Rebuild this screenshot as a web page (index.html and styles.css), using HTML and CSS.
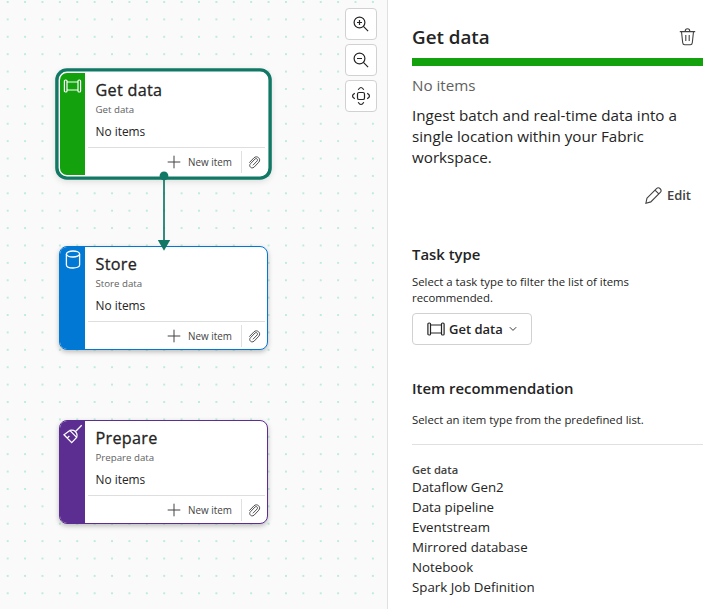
FILE: index.html
```html
<!DOCTYPE html>
<html lang="en">
<head>
<meta charset="utf-8">
<title>Task flow</title>
<link rel="stylesheet" href="styles.css">
</head>
<body>
<svg class="symbols" aria-hidden="true">
  <symbol id="pipe" viewBox="0 0 18 14"><path d="M3.5 3h11M3.5 11h11"/><rect x=".9" y="1" width="2.6" height="12" rx="1.1"/><rect x="14.5" y="1" width="2.6" height="12" rx="1.1"/></symbol>
  <symbol id="plus" viewBox="0 0 14 14"><path d="M7 .7v12.6M.7 7h12.6"/></symbol>
  <symbol id="clip" viewBox="0 0 14 14"><path d="M1.4 7.2 6.4 2C9.6-1.2 14.7 3.2 11.6 6.7L6.7 11.9C4 14.5.2 11 2.6 8.4L7.5 3.3C9.1 1.8 11.2 3.8 9.8 5.4L5.3 10"/></symbol>
</svg>
<div class="app">
  <main class="canvas">
    <section class="node get selected">
      <div class="stripe"><svg class="pipe-icon"><use href="#pipe"/></svg></div>
      <div class="content">
        <div class="info"><h3>Get data</h3><p class="kind">Get data</p><p class="count">No items</p></div>
        <div class="actions"><div class="new"><svg class="plus"><use href="#plus"/></svg><span>New item</span></div><div class="attach"><svg><use href="#clip"/></svg></div></div>
      </div>
    </section>
    <section class="node store">
      <div class="stripe"><svg class="store-icon" viewBox="0 0 16 19"><ellipse cx="8" cy="4" rx="6.6" ry="3"/><path d="M1.4 4v11c0 4 13.2 4 13.2 0V4"/></svg></div>
      <div class="content">
        <div class="info"><h3>Store</h3><p class="kind">Store data</p><p class="count">No items</p></div>
        <div class="actions"><div class="new"><svg class="plus"><use href="#plus"/></svg><span>New item</span></div><div class="attach"><svg><use href="#clip"/></svg></div></div>
      </div>
    </section>
    <section class="node prepare">
      <div class="stripe"><svg class="broom-icon" viewBox="0 0 20 20"><path d="M18.7 1.3 12.3 7.7M6.8 6.4l6.9 7M6.8 6.4 1 10.8 8.7 18.6l5-5.2C15 11 13.2 7.4 10.6 6.4c-1.3-.4-2.7-.4-3.8 0M4.2 14l2.2-2"/></svg></div>
      <div class="content">
        <div class="info"><h3>Prepare</h3><p class="kind">Prepare data</p><p class="count">No items</p></div>
        <div class="actions"><div class="new"><svg class="plus"><use href="#plus"/></svg><span>New item</span></div><div class="attach"><svg><use href="#clip"/></svg></div></div>
      </div>
    </section>
    <svg class="edge" viewBox="0 0 14 80"><path d="M7 4v67" stroke="#117865" stroke-width="1.7"/><circle cx="7" cy="4.9" r="4.4" fill="#117865"/><path d="M.8 69h12.4L7 79.7z" fill="#117865"/></svg>
    <div class="zoom">
      <button aria-label="Zoom in"><svg viewBox="0 0 16 16"><circle cx="6.5" cy="6.5" r="5.4"/><path d="m10.4 10.4 4.7 4.7M6.5 4v5M4 6.5h5"/></svg></button>
      <button aria-label="Zoom out"><svg viewBox="0 0 16 16"><circle cx="6.5" cy="6.5" r="5.4"/><path d="m10.4 10.4 4.7 4.7M4 6.5h5"/></svg></button>
      <button aria-label="Fit"><svg class="fit" viewBox="0 0 20 20"><rect x="6.5" y="6.5" width="7" height="7" rx="1.6"/><path d="M7.2 3.8Q10-.8 12.8 3.8M7.2 16.2q2.8 4.6 5.6 0M3.8 7.2Q-.8 10 3.8 12.8M16.2 7.2q4.6 2.8 0 5.6"/></svg></button>
    </div>
  </main>
  <aside class="panel">
    <header><h1>Get data</h1><svg class="trash" viewBox="0 0 17 18"><path d="M.8 3.6h15.4M6.2 3.4C6.2-.1 10.8-.1 10.8 3.4M2.5 3.8l1.2 11c.1 1.2.9 2 2 2h5.6c1.1 0 1.9-.8 2-2l1.2-11M6.8 7v6M10.2 7v6"/></svg></header>
    <div class="bar"></div>
    <p class="status">No items</p>
    <p class="description">Ingest batch and real-time data into a<br>single location within your Fabric<br>workspace.</p>
    <div class="edit"><svg viewBox="0 0 17 17"><path d="M2 11.1 11.5 1.6C13.9-.7 17.6 3 15.3 5.4L5.8 14.9.9 16.2zM10 3.1l3.8 3.8"/></svg><span>Edit</span></div>
    <h2>Task type</h2>
    <p class="hint">Select a task type to filter the list of items<br>recommended.</p>
    <button class="picker"><svg class="pipe-icon"><use href="#pipe"/></svg><span>Get data</span><svg class="chevron" viewBox="0 0 8 6"><path d="m.8 1.2 3.2 3.2 3.2-3.2"/></svg></button>
    <h2 class="recommend">Item recommendation</h2>
    <p class="hint second">Select an item type from the predefined list.</p>
    <hr>
    <h4>Get data</h4>
    <ul><li>Dataflow Gen2</li><li>Data pipeline</li><li>Eventstream</li><li>Mirrored database</li><li>Notebook</li><li>Spark Job Definition</li></ul>
  </aside>
</div>
</body>
</html>
```
FILE: styles.css
```css
* { box-sizing: border-box; }
body { margin: 0; font-family: "Open Sans", "Noto Sans", sans-serif; color: #242424; overflow: hidden; }
h1, h2, h3, h4, p, ul { margin: 0; padding: 0; font-weight: 400; }
h1, h2, h4 { font-weight: 600; }
button { font: inherit; color: inherit; background: #fff; border: 1px solid #d1d1d1; border-radius: 4px; padding: 0; display: flex; align-items: center; }
svg { fill: none; stroke: currentColor; stroke-width: 1.1; flex: none; display: block; }
.symbols { position: absolute; width: 0; height: 0; }
.app { display: flex; width: 711px; height: 609px; }

.canvas {
  position: relative; width: 387px; height: 609px; background-color: #fafafa;
  background-image: radial-gradient(circle at center, #9fe6d0 0.5px, transparent 1.1px);
  background-size: 17.4px 17.4px; background-position: -1px -6.7px;
}
.node {
  position: absolute; left: 59px; width: 209px; height: 104px; display: flex; overflow: hidden;
  background: #fff; border: 1px solid var(--tone); border-radius: 8px; box-shadow: 0 2px 5px rgba(0, 0, 0, .25);
}
.get { --tone: #13a10e; top: 72px; }
.store { --tone: #0078d4; top: 246px; }
.prepare { --tone: #5c2e91; top: 420px; }
.selected { border-color: #fff; box-shadow: 0 0 0 .4px #fff, 0 0 0 3.8px #117865, 0 2px 7px 3px rgba(0, 0, 0, .14); }
.stripe { width: 25px; background: var(--tone); color: #fff; display: flex; justify-content: center; align-items: flex-start; padding-top: 6px; }
.pipe-icon { width: 18px; height: 14px; stroke-width: 1.2; }
.stripe .pipe-icon { width: 19px; }
.store .stripe { padding-top: 3px; }
.store-icon { width: 16px; height: 19px; stroke-width: 1.3; }
.prepare .stripe { padding-top: 3px; }
.broom-icon { width: 20px; height: 20px; stroke-width: 1.3; }
.content { flex: 1; padding: 0 2px 0 3px; }
.info { height: 75px; padding: 6px 0 0 7.5px; border-bottom: 1px solid #dcdfde; }
.node h3 { font-size: 16.2px; line-height: 23px; letter-spacing: .3px; -webkit-text-stroke: .3px currentColor; }
.kind { font-size: 9.7px; line-height: 15px; color: #616161; }
.count { font-size: 11.9px; line-height: 18px; margin-top: 5px; }
.actions { display: flex; justify-content: flex-end; height: 27px; }
.new { display: flex; align-items: center; gap: 7px; margin-right: 9px; font-size: 9.9px; color: #424242; }
.plus { width: 14px; height: 14px; stroke-width: 1; }
.attach { height: 22px; margin-top: 3px; width: 24px; border-left: 1px solid #e0e0e0; display: flex; align-items: center; padding-left: 6px; color: #424242; }
.attach svg { width: 13px; height: 13px; overflow: visible; stroke-width: 1; }
.edge { position: absolute; left: 157px; top: 171px; width: 14px; height: 80px; stroke: none; }
.zoom { position: absolute; left: 345px; top: 8px; display: grid; gap: 4px; }
.zoom button { width: 32px; height: 32px; justify-content: center; }
.zoom svg { width: 16px; height: 16px; stroke-width: 1.2; }
.zoom .fit { width: 20px; height: 20px; }

.panel { width: 324px; height: 609px; padding: 23px 8px 0 24px; border-left: 1px solid #e0e0e0; background: #fff; }
.panel header { display: flex; justify-content: space-between; align-items: center; height: 28px; padding-right: 7px; }
h1 { font-size: 18.8px; line-height: 28px; }
.trash { width: 17px; height: 18px; color: #424242; }
.bar { height: 8px; margin-top: 7px; background: #13a10e; }
.status { margin-top: 8px; font-size: 15.2px; line-height: 22px; color: #616161; }
.description { margin-top: 9px; font-size: 15.2px; line-height: 21px; white-space: nowrap; }
.edit { display: flex; justify-content: flex-end; align-items: center; gap: 5px; height: 20px; margin-top: 17px; padding-right: 12px; font-size: 13px; font-weight: 600; color: #424242; }
.edit svg { width: 17px; height: 17px; }
h2 { font-size: 14.9px; line-height: 22px; margin-top: 38px; }
.hint { font-size: 11.37px; line-height: 16px; margin-top: 9px; white-space: nowrap; }
.picker { width: 120px; height: 32px; margin-top: 7px; padding-left: 14px; font-size: 13px; font-weight: 600; }
.picker span { margin: 0 6px 0 4px; }
.chevron { width: 8px; height: 6px; stroke-width: .9; }
.recommend { margin-top: 32px; }
.second { margin-top: 13px; }
hr { margin: 16px 0 0; border: 0; border-top: 1px solid #e0e0e0; }
h4 { margin-top: 17px; font-size: 11.2px; line-height: 16px; color: #424242; }
ul { list-style: none; margin-top: -1px; font-size: 13.3px; line-height: 20px; }
```
